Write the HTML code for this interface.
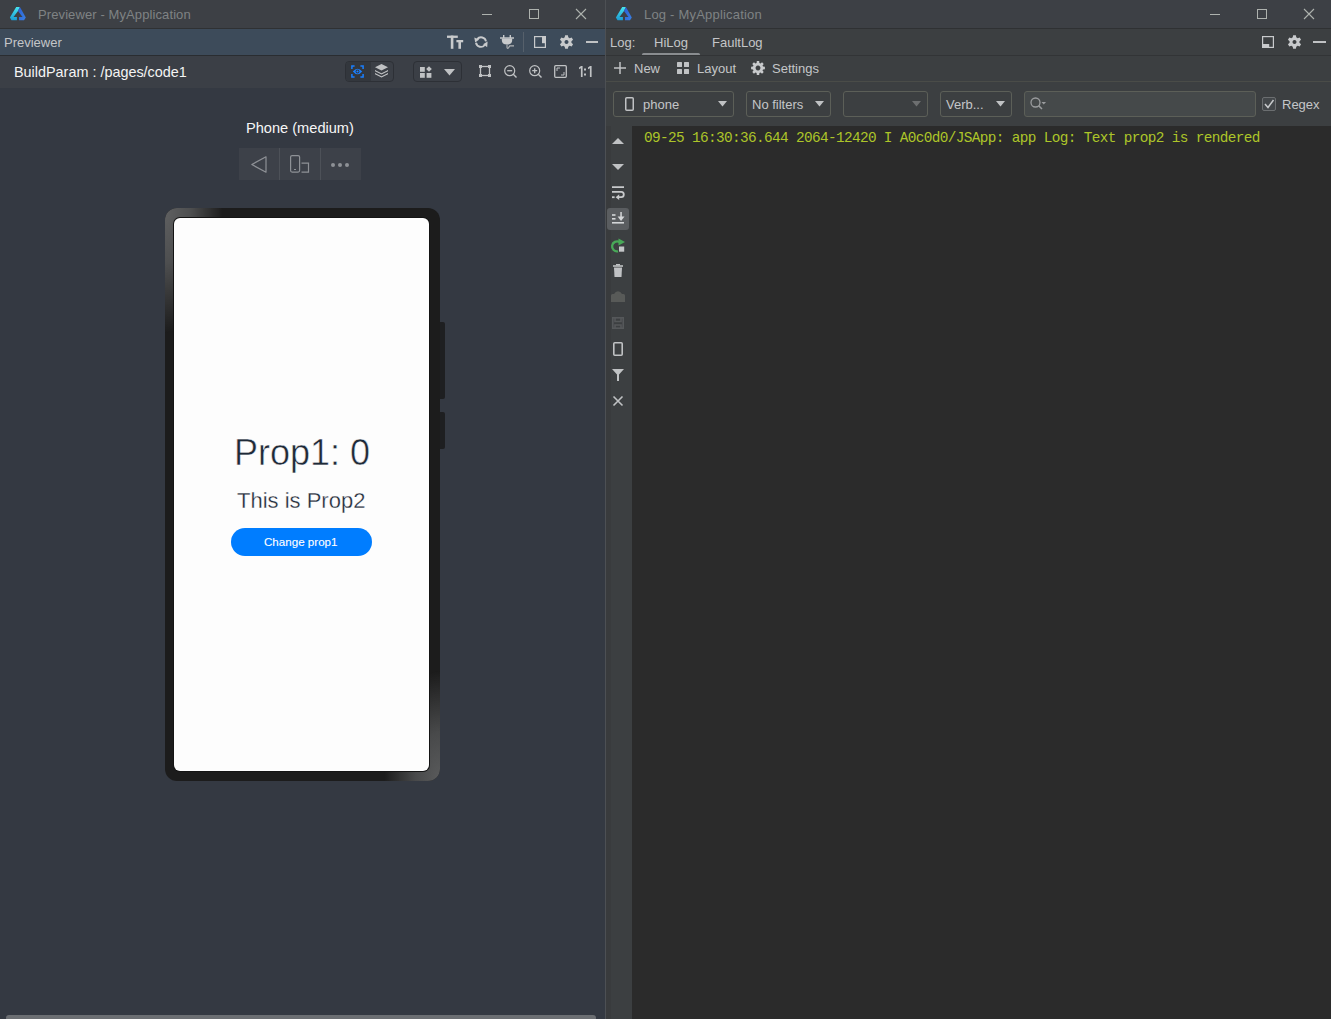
<!DOCTYPE html>
<html><head><meta charset="utf-8">
<style>
*{margin:0;padding:0;box-sizing:border-box}
html,body{width:1331px;height:1019px;overflow:hidden;background:#2b2b2b;font-family:"Liberation Sans",sans-serif}
.a{position:absolute}
.t{position:absolute;white-space:pre;line-height:1}
svg{position:absolute;overflow:visible}
</style></head><body>
<!-- ============ LEFT WINDOW ============ -->
<div class="a" style="left:0;top:0;width:605px;height:1019px;background:#343942"></div>
<!-- title bar -->
<div class="a" style="left:0;top:0;width:605px;height:28px;background:#3d4045"></div>
<div class="a" style="left:0;top:28px;width:605px;height:1px;background:#2f3133"></div>
<!-- logo -->
<svg style="left:9px;top:6px" width="18" height="15" viewBox="0 0 18 15">
<defs><linearGradient id="lgL" x1="0" y1="0" x2="0" y2="1"><stop offset="0" stop-color="#48e6ef"/><stop offset="1" stop-color="#1a9ad2"/></linearGradient><linearGradient id="lgR" x1="0" y1="0" x2="1" y2="1"><stop offset="0" stop-color="#2a5ed4"/><stop offset="1" stop-color="#3a80e2"/></linearGradient></defs>
<path d="M7.2 0.9L10.9 0.9L9 4.9L4.5 11L7.9 11L7.9 14.3L2.5 14.3L0.9 11.5Z" fill="url(#lgL)"/>
<path d="M10.9 0.9L16.8 11.5L15 14.3L10 14.3L10 11L13.5 11L9 4.9Z" fill="url(#lgR)"/>
</svg>
<div class="t" style="left:38px;top:8px;font-size:13px;letter-spacing:0.1px;color:#7f8384">Previewer - MyApplication</div>
<!-- window controls -->
<div class="a" style="left:482px;top:14px;width:10px;height:1px;background:#aeb2ae"></div>
<div class="a" style="left:529px;top:9px;width:10px;height:10px;border:1px solid #aeb2ae"></div>
<svg style="left:576px;top:9px" width="10" height="10" viewBox="0 0 10 10"><path d="M0 0L10 10M10 0L0 10" stroke="#aeb2ae" stroke-width="1.1"/></svg>

<!-- panel header -->
<div class="a" style="left:0;top:29px;width:605px;height:26px;background:#3d4b5a"></div>
<div class="a" style="left:0;top:55px;width:605px;height:1px;background:#2a2d31"></div>
<div class="t" style="left:4px;top:36px;font-size:13px;color:#c4c6c8">Previewer</div>
<!-- header icons -->
<svg style="left:447px;top:35px" width="17" height="14" viewBox="0 0 17 14"><g fill="#c8cacc"><rect x="0" y="0.6" width="10.8" height="2.3"/><rect x="3.8" y="0.6" width="2.6" height="13.2"/><rect x="9.4" y="5" width="6.8" height="2.3"/><rect x="11.4" y="5" width="2.6" height="8.8"/></g></svg>
<svg style="left:474px;top:35px" width="14" height="14" viewBox="0 0 14 14"><g fill="none" stroke="#c8cacc" stroke-width="1.9"><path d="M3.2 4.2A5 5 0 0 1 12 6.4"/><path d="M2 7.8A5 5 0 0 0 10.8 10"/></g><g fill="#c8cacc"><path d="M0.3 2.6L5.2 4.4L1.2 7.6Z"/><path d="M13.6 6.6L13.2 12.2L9.1 9.3Z"/></g></svg>
<svg style="left:500px;top:35px" width="15" height="15" viewBox="0 0 15 15"><g fill="#c8cacc"><rect x="0" y="2.3" width="14" height="1.4"/><rect x="3" y="0" width="1.4" height="3"/><rect x="9.6" y="0" width="1.4" height="3"/><path d="M1.8 3.5H12.2V5Q12.2 9.6 7 9.6Q1.8 9.6 1.8 5Z"/></g><path d="M7 9.4V12.3Q7.3 14.2 8.6 12.6L9.8 10.9H14" fill="none" stroke="#b4b6b8" stroke-width="1.1"/></svg>
<div class="a" style="left:523px;top:32px;width:1px;height:20px;background:#56606b"></div>
<svg style="left:534px;top:36px" width="12" height="12" viewBox="0 0 12 12"><rect x="0.6" y="0.6" width="10.8" height="10.8" fill="none" stroke="#c8cacc" stroke-width="1.2"/><rect x="8" y="0" width="4" height="7.2" fill="#c8cacc"/></svg>
<svg style="left:560px;top:35px" width="13" height="14" viewBox="0 0 13 14"><path fill-rule="evenodd" d="M4.74 2.32L5.13 0.24L7.87 0.24L8.26 2.32L9.67 3.13L11.67 2.43L13.04 4.81L11.43 6.19L11.43 7.81L13.04 9.19L11.67 11.57L9.67 10.87L8.26 11.68L7.87 13.76L5.13 13.76L4.74 11.68L3.33 10.87L1.33 11.57L-0.04 9.19L1.57 7.81L1.57 6.19L-0.04 4.81L1.33 2.43L3.33 3.13Z M6.5 5.0A2.0 2.0 0 1 0 6.51 5.0Z" fill="#c8cacc"/></svg>
<div class="a" style="left:586px;top:41px;width:12px;height:2px;background:#c0c2c4"></div>

<!-- toolbar -->
<div class="a" style="left:0;top:56px;width:605px;height:32px;background:#3b3f46"></div>
<div class="t" style="left:14px;top:65px;font-size:14.4px;color:#f4f4f4">BuildParam : /pages/code1</div>
<!-- group 1 -->
<div class="a" style="left:345px;top:61px;width:49px;height:21px;border:1px solid #2d3036;border-radius:4px;background:#3b3f46;overflow:hidden">
  <div class="a" style="left:0;top:0;width:25px;height:19px;background:#33373d"></div>
</div>
<svg style="left:351px;top:65px" width="14" height="14" viewBox="0 0 14 14"><g fill="none" stroke="#1a7fff" stroke-width="1.5"><path d="M0.9 4V0.9H3.6M9.4 0.9H12.1V4M12.1 9V12.1H9.4M3.6 12.1H0.9V9"/></g><path d="M1.8 6.5Q6.5 0.9 11.2 6.5Q6.5 12.1 1.8 6.5Z" fill="#1a7fff"/><circle cx="6.5" cy="6.5" r="1.9" fill="#33373d"/><circle cx="6.5" cy="6.5" r="1.1" fill="#1a7fff"/></svg>
<svg style="left:375px;top:64px" width="13" height="14" viewBox="0 0 13 14"><g fill="#c0c2c4"><path d="M6.5 0L13 3.3L6.5 6.6L0 3.3Z"/><path d="M0 6L6.5 9.3L13 6L13 7.2L6.5 10.5L0 7.2Z"/><path d="M0 9L6.5 12.3L13 9L13 10.2L6.5 13.5L0 10.2Z"/></g></svg>
<!-- group 2 -->
<div class="a" style="left:413px;top:61px;width:49px;height:21px;border:1px solid #2d3036;border-radius:4px;background:#3b3f46"></div>
<svg style="left:420px;top:66px" width="12" height="12" viewBox="0 0 12 12"><g fill="#c0c2c4"><rect x="0" y="1" width="4.8" height="4.8"/><rect x="0" y="7" width="4.8" height="4.8"/><rect x="6.6" y="7" width="4.8" height="4.8"/><path d="M9 0.2L11.8 3L9 5.8L6.2 3Z"/></g></svg>
<svg style="left:444px;top:69px" width="11" height="7" viewBox="0 0 11 7"><path d="M0 0L11 0L5.5 6.5Z" fill="#c0c2c4"/></svg>
<!-- crop -->
<svg style="left:479px;top:65px" width="12" height="12" viewBox="0 0 12 12"><rect x="1.5" y="1.5" width="9" height="9" fill="none" stroke="#c0c2c4" stroke-width="1.3"/><g fill="#c0c2c4"><rect x="0" y="0" width="3" height="3"/><rect x="9" y="0" width="3" height="3"/><rect x="0" y="9" width="3" height="3"/><rect x="9" y="9" width="3" height="3"/></g></svg>
<svg style="left:504px;top:65px" width="13" height="13" viewBox="0 0 13 13"><circle cx="5.7" cy="5.7" r="5" fill="none" stroke="#c0c2c4" stroke-width="1.2"/><path d="M9.3 9.3L12.5 12.5" stroke="#c0c2c4" stroke-width="1.4"/><path d="M3.2 5.7H8.2" stroke="#c0c2c4" stroke-width="1.3"/></svg>
<svg style="left:529px;top:65px" width="13" height="13" viewBox="0 0 13 13"><circle cx="5.7" cy="5.7" r="5" fill="none" stroke="#c0c2c4" stroke-width="1.2"/><path d="M9.3 9.3L12.5 12.5" stroke="#c0c2c4" stroke-width="1.4"/><path d="M3.2 5.7H8.2M5.7 3.2V8.2" stroke="#c0c2c4" stroke-width="1.3"/></svg>
<svg style="left:554px;top:65px" width="13" height="13" viewBox="0 0 13 13"><rect x="0.7" y="0.7" width="11.6" height="11.6" rx="1" fill="none" stroke="#c0c2c4" stroke-width="1.3"/><path d="M3 6V3H6M10 7V10H7" fill="none" stroke="#c0c2c4" stroke-width="1"/></svg>
<svg style="left:578px;top:66px" width="14" height="11" viewBox="0 0 14 11"><g fill="#c0c2c4"><path d="M1 1.5L3 0H4.6V11H2.9V2.3L1 3.3Z"/><rect x="6" y="2.5" width="2" height="2"/><rect x="6" y="7.5" width="2" height="2"/><path d="M10 1.5L12 0H13.6V11H11.9V2.3L10 3.3Z"/></g></svg>

<!-- device label -->
<div class="t" style="left:246px;top:121px;font-size:14.6px;color:#f6f6f6">Phone (medium)</div>
<div class="a" style="left:239px;top:148px;width:122px;height:32px;background:#3d4149"></div>
<div class="a" style="left:279px;top:148px;width:1px;height:32px;background:#4d5158"></div>
<div class="a" style="left:320px;top:148px;width:1px;height:32px;background:#4d5158"></div>
<svg style="left:251px;top:156px" width="16" height="17" viewBox="0 0 16 17"><path d="M15 0.8L15 16.2L0.8 8.5Z" fill="none" stroke="#8e9196" stroke-width="1.2" stroke-linejoin="round"/></svg>
<svg style="left:290px;top:155px" width="20" height="18" viewBox="0 0 20 18"><rect x="0.6" y="0.6" width="9" height="16.5" rx="1.5" fill="none" stroke="#8e9196" stroke-width="1.2"/><path d="M4 14.5H6" stroke="#8e9196" stroke-width="1"/><path d="M11.5 8.2H18.5V17.1H11.5" fill="none" stroke="#8e9196" stroke-width="1.2"/></svg>
<div class="a" style="left:331px;top:163px;width:4px;height:4px;border-radius:2px;background:#8e9196"></div>
<div class="a" style="left:338px;top:163px;width:4px;height:4px;border-radius:2px;background:#8e9196"></div>
<div class="a" style="left:345px;top:163px;width:4px;height:4px;border-radius:2px;background:#8e9196"></div>

<!-- phone frame -->
<div class="a" style="left:440px;top:322px;width:5px;height:77px;border-radius:0 2px 2px 0;background:#1e1f21"></div>
<div class="a" style="left:440px;top:412px;width:5px;height:37px;border-radius:0 2px 2px 0;background:#1e1f21"></div>
<div class="a" style="left:165px;top:208px;width:275px;height:573px;border-radius:12px;background:#1c1c1c"></div>
<div class="a" style="left:165px;top:208px;width:275px;height:573px;border-radius:12px;background:radial-gradient(ellipse 58px 125px at 0 0,#5f6061 0%,#4d4e4f 45%,rgba(28,28,28,0) 100%),radial-gradient(ellipse 56px 110px at 100% 100%,#5a5b5c 0%,#48494a 45%,rgba(28,28,28,0) 100%)"></div>
<div class="a" style="left:174px;top:218px;width:255px;height:553px;border-radius:6px;background:#fdfdfd;overflow:hidden;box-shadow:0 0 0 1px #141414">
  <div class="t" style="left:60px;top:217px;font-size:36px;color:#1f2a38;-webkit-text-stroke:0.5px #fdfdfd">Prop1: 0</div>
  <div class="t" style="left:63px;top:272px;font-size:22px;color:#1f2a38;-webkit-text-stroke:0.3px #fdfdfd">This is Prop2</div>
  <div class="a" style="left:57px;top:310px;width:141px;height:28px;border-radius:14px;background:#007dff"></div>
  <div class="t" style="left:90px;top:318px;font-size:11.6px;color:#ffffff;-webkit-text-stroke:0.1px #ffffff">Change prop1</div>
</div>

<!-- scrollbar -->
<div class="a" style="left:6px;top:1015px;width:590px;height:6px;border-radius:3px;background:#6c6f73"></div>

<!-- ============ DIVIDER ============ -->
<div class="a" style="left:605px;top:0;width:1px;height:1019px;background:#4d5054"></div>

<!-- ============ RIGHT WINDOW ============ -->
<div class="a" style="left:606px;top:0;width:725px;height:1019px;background:#3c3f41"></div>
<div class="a" style="left:606px;top:126px;width:5px;height:893px;background:#393b3d"></div>
<div class="a" style="left:606px;top:0;width:725px;height:28px;background:#3d4045"></div>
<div class="a" style="left:606px;top:28px;width:725px;height:1px;background:#2f3133"></div>
<svg style="left:615px;top:6px" width="18" height="15" viewBox="0 0 18 15">
<path d="M7.2 0.9L10.9 0.9L9 4.9L4.5 11L7.9 11L7.9 14.3L2.5 14.3L0.9 11.5Z" fill="url(#lgL)"/>
<path d="M10.9 0.9L16.8 11.5L15 14.3L10 14.3L10 11L13.5 11L9 4.9Z" fill="url(#lgR)"/>
</svg>
<div class="t" style="left:644px;top:8px;font-size:13px;letter-spacing:0.2px;color:#7f8384">Log - MyApplication</div>
<div class="a" style="left:1210px;top:14px;width:10px;height:1px;background:#aeb2ae"></div>
<div class="a" style="left:1257px;top:9px;width:10px;height:10px;border:1px solid #aeb2ae"></div>
<svg style="left:1304px;top:9px" width="10" height="10" viewBox="0 0 10 10"><path d="M0 0L10 10M10 0L0 10" stroke="#aeb2ae" stroke-width="1.1"/></svg>

<!-- log header -->
<div class="t" style="left:610px;top:36px;font-size:13px;color:#c4c6c8">Log:</div>
<div class="t" style="left:654px;top:36px;font-size:13px;color:#c4c6c8">HiLog</div>
<div class="t" style="left:712px;top:36px;font-size:13px;color:#c4c6c8">FaultLog</div>
<div class="a" style="left:642px;top:53px;width:58px;height:3px;border-radius:2px;background:#8a8d90"></div>
<div class="a" style="left:606px;top:55px;width:725px;height:1px;background:#323436"></div>
<svg style="left:1262px;top:36px" width="12" height="12" viewBox="0 0 12 12"><rect x="0.6" y="0.6" width="10.8" height="10.8" fill="none" stroke="#c8cacc" stroke-width="1.2"/><rect x="0" y="8" width="7.2" height="4" fill="#c8cacc"/></svg>
<svg style="left:1288px;top:35px" width="13" height="14" viewBox="0 0 13 14"><path fill-rule="evenodd" d="M4.74 2.32L5.13 0.24L7.87 0.24L8.26 2.32L9.67 3.13L11.67 2.43L13.04 4.81L11.43 6.19L11.43 7.81L13.04 9.19L11.67 11.57L9.67 10.87L8.26 11.68L7.87 13.76L5.13 13.76L4.74 11.68L3.33 10.87L1.33 11.57L-0.04 9.19L1.57 7.81L1.57 6.19L-0.04 4.81L1.33 2.43L3.33 3.13Z M6.5 5.0A2.0 2.0 0 1 0 6.51 5.0Z" fill="#c8cacc"/></svg>
<div class="a" style="left:1313px;top:41px;width:13px;height:2px;background:#c0c2c4"></div>

<!-- toolbar -->
<svg style="left:614px;top:62px" width="12" height="12" viewBox="0 0 12 12"><path d="M6 0V12M0 6H12" stroke="#c0c2c4" stroke-width="1.5"/></svg>
<div class="t" style="left:634px;top:62px;font-size:13px;color:#c4c6c8">New</div>
<svg style="left:677px;top:62px" width="12" height="12" viewBox="0 0 12 12"><g fill="#c0c2c4"><rect x="0" y="0" width="5" height="5" rx="0.5"/><rect x="7" y="0" width="5" height="5" rx="0.5"/><rect x="0" y="7" width="5" height="5" rx="0.5"/><rect x="7" y="7" width="5" height="5" rx="0.5"/></g></svg>
<div class="t" style="left:697px;top:62px;font-size:13px;color:#c4c6c8">Layout</div>
<svg style="left:751px;top:61px" width="14" height="14" viewBox="0 0 14 14"><path fill-rule="evenodd" d="M5.61 1.99L5.82 0.10L8.18 0.10L8.39 1.99L9.56 2.48L11.04 1.28L12.72 2.96L11.52 4.44L12.01 5.61L13.90 5.82L13.90 8.18L12.01 8.39L11.52 9.56L12.72 11.04L11.04 12.72L9.56 11.52L8.39 12.01L8.18 13.90L5.82 13.90L5.61 12.01L4.44 11.52L2.96 12.72L1.28 11.04L2.48 9.56L1.99 8.39L0.10 8.18L0.10 5.82L1.99 5.61L2.48 4.44L1.28 2.96L2.96 1.28L4.44 2.48Z M7 4.6A2.4 2.4 0 1 0 7.01 4.6Z" fill="#c8cacc"/></svg>
<div class="t" style="left:772px;top:62px;font-size:13px;color:#c4c6c8">Settings</div>
<div class="a" style="left:606px;top:81px;width:725px;height:1px;background:#4a4c48"></div>

<!-- filter bar -->
<div class="a" style="left:613px;top:91px;width:121px;height:26px;border:1px solid #5c5f58;border-radius:3px"></div>
<svg style="left:625px;top:97px" width="9" height="14" viewBox="0 0 9 14"><rect x="0.75" y="0.75" width="7.5" height="12.5" rx="1" fill="none" stroke="#c0c2c4" stroke-width="1.5"/></svg>
<div class="t" style="left:643px;top:98px;font-size:13px;color:#c4c6c8">phone</div>
<svg style="left:718px;top:101px" width="9" height="6" viewBox="0 0 9 6"><path d="M0 0H9L4.5 5.5Z" fill="#c0c2c4"/></svg>

<div class="a" style="left:746px;top:91px;width:85px;height:26px;border:1px solid #5c5f58;border-radius:3px"></div>
<div class="t" style="left:752px;top:98px;font-size:13px;color:#c4c6c8">No filters</div>
<svg style="left:815px;top:101px" width="9" height="6" viewBox="0 0 9 6"><path d="M0 0H9L4.5 5.5Z" fill="#c0c2c4"/></svg>

<div class="a" style="left:843px;top:91px;width:85px;height:26px;border:1px solid #5c5f58;border-radius:3px"></div>
<svg style="left:912px;top:101px" width="9" height="6" viewBox="0 0 9 6"><path d="M0 0H9L4.5 5.5Z" fill="#6d6f70"/></svg>

<div class="a" style="left:940px;top:91px;width:72px;height:26px;border:1px solid #5c5f58;border-radius:3px"></div>
<div class="t" style="left:946px;top:98px;font-size:13px;color:#c4c6c8">Verb...</div>
<svg style="left:996px;top:101px" width="9" height="6" viewBox="0 0 9 6"><path d="M0 0H9L4.5 5.5Z" fill="#c0c2c4"/></svg>

<div class="a" style="left:1024px;top:91px;width:232px;height:26px;border:1px solid #5c5f58;border-radius:3px;background:#45494a"></div>
<svg style="left:1030px;top:97px" width="16" height="13" viewBox="0 0 16 13"><circle cx="5.5" cy="5.5" r="4.5" fill="none" stroke="#9a9c9e" stroke-width="1.3"/><path d="M8.6 8.6L12 12" stroke="#9a9c9e" stroke-width="1.5"/><path d="M11.5 5H16L13.75 7.5Z" fill="#9a9c9e"/></svg>
<div class="a" style="left:1262px;top:97px;width:14px;height:14px;border:1px solid #6b6e70;border-radius:2px;background:#43474a"></div>
<svg style="left:1264px;top:99px" width="10" height="10" viewBox="0 0 10 10"><path d="M1 5L4 8.5L9.5 1" fill="none" stroke="#c8cacc" stroke-width="1.5"/></svg>
<div class="t" style="left:1282px;top:98px;font-size:13px;color:#c4c6c8">Regex</div>

<!-- log area -->
<div class="a" style="left:632px;top:126px;width:699px;height:893px;background:#2b2b2b"></div>
<div class="t" style="left:644px;top:131px;font-family:'Liberation Mono',monospace;font-size:14.4px;letter-spacing:-0.64px;color:#adc529">09-25 16:30:36.644 2064-12420 I A0c0d0/JSApp: app Log: Text prop2 is rendered</div>

<!-- sidebar icons -->
<svg style="left:612px;top:138px" width="12" height="6" viewBox="0 0 12 6"><path d="M0 6H12L6 0Z" fill="#c0c2c4"/></svg>
<svg style="left:612px;top:164px" width="12" height="6" viewBox="0 0 12 6"><path d="M0 0H12L6 6Z" fill="#c0c2c4"/></svg>
<svg style="left:612px;top:186px" width="13" height="14" viewBox="0 0 13 14"><g fill="none" stroke="#c8cacc" stroke-width="1.8"><path d="M0 1.2H12M0 5.8H9.3Q11.8 5.8 11.8 8.5Q11.8 11.2 9.3 11.2H6"/></g><path d="M7.2 8.3V14L3.6 11.2Z" fill="#c8cacc"/><rect x="0" y="10.3" width="2.6" height="1.8" fill="#c8cacc"/></svg>
<div class="a" style="left:607px;top:208px;width:22px;height:22px;border-radius:3px;background:#5a5d60"></div>
<svg style="left:612px;top:212px" width="13" height="12" viewBox="0 0 13 12"><g fill="#d4d6d8"><rect x="0" y="2.2" width="3.5" height="1.6"/><rect x="0" y="6" width="3.5" height="1.6"/><rect x="0" y="10" width="12" height="1.6"/><rect x="8.3" y="0" width="1.5" height="5"/><path d="M5.6 4.6H12.5L9.05 9Z"/></g></svg>
<svg style="left:612px;top:238px" width="14" height="15" viewBox="0 0 14 15"><path d="M7.5 4A5 5 0 1 0 6 13.3" fill="none" stroke="#48a958" stroke-width="2.3"/><path d="M6.5 0.5L13 4L6.5 7.5Z" fill="#48a958"/><rect x="7" y="8.5" width="5.2" height="5.2" fill="#c4c6c8"/></svg>
<svg style="left:613px;top:264px" width="10" height="13" viewBox="0 0 10 13"><g fill="#c0c2c4"><rect x="0" y="1.2" width="10" height="1.6"/><rect x="3" y="0" width="4" height="1.5"/><path d="M1 3.5H9L8.5 13H1.5Z"/></g></svg>
<svg style="left:611px;top:291px" width="14" height="11" viewBox="0 0 14 11"><path d="M0 4.5Q0 3 1.5 3H3Q4.5 0.3 7 0.3Q9.5 0.3 11 3H12.5Q14 3 14 4.5V11H0Z" fill="#585a58"/></svg>
<svg style="left:612px;top:317px" width="12" height="12" viewBox="0 0 12 12"><g fill="none" stroke="#55585a" stroke-width="1.6"><rect x="0.8" y="0.8" width="10.4" height="10.4"/><path d="M3 0.8V4.5H9V0.8M3 11.2V8H9V11.2"/></g></svg>
<svg style="left:613px;top:342px" width="10" height="14" viewBox="0 0 10 14"><rect x="0.8" y="0.8" width="8.4" height="12.4" rx="1" fill="none" stroke="#c0c2c4" stroke-width="1.6"/></svg>
<svg style="left:612px;top:369px" width="12" height="12" viewBox="0 0 12 12"><path d="M0 0H12L7 5.5V12H5V5.5Z" fill="#c0c2c4"/></svg>
<svg style="left:613px;top:396px" width="10" height="10" viewBox="0 0 10 10"><path d="M0.5 0.5L9.5 9.5M9.5 0.5L0.5 9.5" stroke="#c0c2c4" stroke-width="1.6"/></svg>
</body></html>
